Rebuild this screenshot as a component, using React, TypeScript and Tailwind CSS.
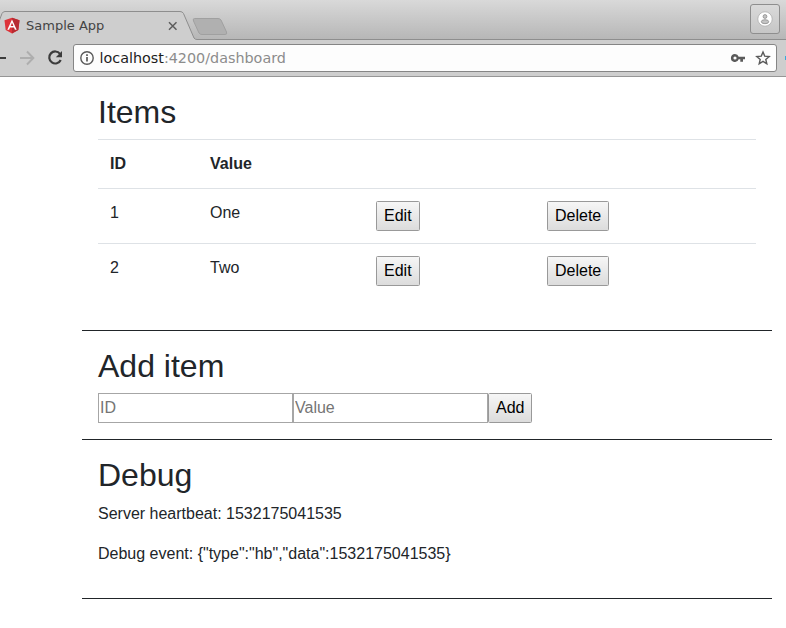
import React from "react";

const items = [
  { id: 1, value: "One" },
  { id: 2, value: "Two" },
];

const buttonClass =
  "block h-[30px] rounded-[1.5px] border border-[#999] bg-linear-to-b from-[#f6f6f6] to-[#dcdcdc] px-[7px] text-base leading-[26px] text-black";

function TabStrip() {
  return (
    <div className="relative h-10 bg-linear-to-b from-[#d9d9d9] to-[#b6b6b6]">
      <svg className="absolute inset-0" width="786" height="40" viewBox="0 0 786 40" fill="none">
        <path d="M-8 40 L2 13.5 Q3 11.5 5 11.5 H180 Q182.500 11.500 183.500 13.500 L194 38 Q195 39.500 197 39.500 H786 V41 H-8 Z" fill="#cecece" />
        <path d="M-8 40 L2 13.5 Q3 11.5 5 11.5 H180 Q182.500 11.500 183.500 13.500 L194 38 Q195 39.500 197 39.500 H786" stroke="#8e8e8e" />
        <path d="M194.500 18.500 H218 Q220 18.500 221 20 L226.500 32 Q227.500 34.500 225 34.500 H202 Q200 34.500 199 33 L193.500 21 Q192.500 18.500 194.500 18.500 Z" fill="#b0b0b0" stroke="#a0a0a0" />
      </svg>
      <div className="relative flex h-10 items-start">
        <svg className="mt-[17px] ml-1 shrink-0" width="16" height="17" viewBox="0 0 16 17">
          <path d="M8 .7 L15.500 3.200 L14.300 13 L8 16.600 L1.700 13 L.5 3.200 Z" fill="#dd343a" />
          <path d="M8 .7 L15.500 3.200 L14.300 13 L8 16.600 Z" fill="#b82b32" />
          <path d="M8 2.500 L3.300 12.700 H5.100 L6 10.500 H10 L10.900 12.700 H12.700 Z M8 5.800 L9.400 9 H6.600 Z" fill="#fff" fillRule="evenodd" />
        </svg>
        <span className="mt-[16px] ml-[6px] w-[141px] text-[13px] leading-5 text-[#444]">Sample App</span>
        <svg className="mt-[21px]" width="11" height="11" viewBox="0 0 11 11" stroke="#5c5c5c" strokeWidth="1.5">
          <path d="M2 1.300 L9.500 8.800 M9.500 1.300 L2 8.800" />
        </svg>
        <div className="mt-1 mr-[6px] ml-auto flex h-[30px] w-[30px] items-center justify-center rounded-[3px] border border-[#8e8e8e] bg-linear-to-b from-[#dadada] to-[#c6c6c6]">
          <svg width="16" height="16" viewBox="0 0 16 16">
            <circle cx="8" cy="8" r="7.200" fill="#fff" stroke="#a8a8a8" strokeWidth=".7" />
            <circle cx="8" cy="5.500" r="1.900" fill="#c4c4c4" stroke="#8c8c8c" strokeWidth=".8" />
            <ellipse cx="8" cy="10.700" rx="3.700" ry="2" fill="#c4c4c4" stroke="#8c8c8c" strokeWidth=".8" />
          </svg>
        </div>
      </div>
    </div>
  );
}

function Toolbar() {
  return (
    <div className="flex h-[37px] items-start border-b border-[#969696] bg-[#cecece]">
      <svg className="mt-1 shrink-0" width="73" height="28" viewBox="0 0 73 28" fill="none">
        <path d="M0 14 H6" stroke="#3c3c3c" strokeWidth="2" />
        <path d="M20 14 H33 M27 7.500 L33.300 14 L27 20.500" stroke="#aeaeae" strokeWidth="2" />
        <path d="M60 9.800 A6 6 0 1 0 60.700 16" stroke="#3c3c3c" strokeWidth="2.200" />
        <path d="M62 7 V13.200 H55.800 Z" fill="#3c3c3c" />
      </svg>
      <div className="mt-1 flex h-7 w-[704px] shrink-0 items-center rounded-[3px] border border-[#858585] bg-[#fdfdfd]">
        <svg className="ml-[6px] shrink-0" width="14" height="14" viewBox="0 0 14 14" fill="none">
          <circle cx="7" cy="7" r="6.200" stroke="#5a5a5a" strokeWidth="1.400" />
          <path d="M7 6 V10.500 M7 3.200 V4.900" stroke="#5a5a5a" strokeWidth="1.700" />
        </svg>
        <span className="ml-[5.5px] text-[14.35px] leading-6 text-[#8c8c8c]">
          <span className="text-[#1c1c1c]">localhost</span>:4200/dashboard
        </span>
        <svg className="ml-auto shrink-0" width="15" height="10" viewBox="0 0 15 10">
          <path d="M5 1 A4 4 0 1 0 8.700 6.300 H10.300 V8.700 H13 V6.300 H15 V3.700 H8.700 A4 4 0 0 0 5 1 Z M5 3.400 A1.600 1.600 0 1 1 5 6.600 A1.600 1.600 0 0 1 5 3.400 Z" fill="#5a5a5a" fillRule="evenodd" />
        </svg>
        <svg className="mr-[5px] ml-[10px] shrink-0" width="16" height="16" viewBox="0 0 16 16" fill="none">
          <path d="M8 2 L9.700 6.100 L14.200 6.500 L10.800 9.400 L11.800 13.800 L8 11.400 L4.200 13.800 L5.200 9.400 L1.800 6.500 L6.300 6.100 Z" stroke="#5a5a5a" strokeWidth="1.400" />
        </svg>
      </div>
      <svg className="mt-[14px] ml-2 shrink-0" width="1" height="8" viewBox="0 0 1 8">
        <path d="M0 2 H1 V6 H0 Z" fill="#39a9dc" />
      </svg>
    </div>
  );
}

function Section({ title, children }: { title: string; children: React.ReactNode }) {
  return (
    <section className="border-b border-[#212529] p-4">
      <h2 className="mb-2 text-[32px] leading-[38px] font-normal">{title}</h2>
      {children}
    </section>
  );
}

export default function App() {
  return (
    <div className="h-[628px] w-[786px] overflow-hidden bg-white">
      <header className="font-['DejaVu_Sans',sans-serif]">
        <TabStrip />
        <Toolbar />
      </header>
      <main className="mr-[14px] ml-[82px] font-['Liberation_Sans',Arial,sans-serif] text-base text-[#212529]">
        <Section title="Items">
          <table className="mb-4 w-[658px] table-fixed border-separate border-spacing-0">
            <colgroup>
              <col className="w-[100px]" />
              <col className="w-[166px]" />
              <col className="w-[171px]" />
              <col />
            </colgroup>
            <thead>
              <tr className="text-left leading-6 *:border-t *:border-[#dee2e6] *:p-3">
                <th>ID</th>
                <th>Value</th>
                <th></th>
                <th></th>
              </tr>
            </thead>
            <tbody>
              {items.map((item) => (
                <tr key={item.id} className="align-top leading-6 *:border-t *:border-[#dee2e6] *:p-3">
                  <td>{item.id}</td>
                  <td>{item.value}</td>
                  <td><button className={buttonClass}>Edit</button></td>
                  <td><button className={buttonClass}>Delete</button></td>
                </tr>
              ))}
            </tbody>
          </table>
        </Section>
        <Section title="Add item">
          <div className="flex">
            <input className="h-[30px] w-[195px] border border-[#a6a6a6] px-px placeholder:text-[#757575]" placeholder="ID" />
            <input className="h-[30px] w-[195px] border border-[#a6a6a6] px-px placeholder:text-[#757575]" placeholder="Value" />
            <button className={buttonClass}>Add</button>
          </div>
        </Section>
        <Section title="Debug">
          <p className="mb-4 leading-6">Server heartbeat: 1532175041535</p>
          <p className="mb-4 leading-6">{'Debug event: {"type":"hb","data":1532175041535}'}</p>
        </Section>
      </main>
    </div>
  );
}
